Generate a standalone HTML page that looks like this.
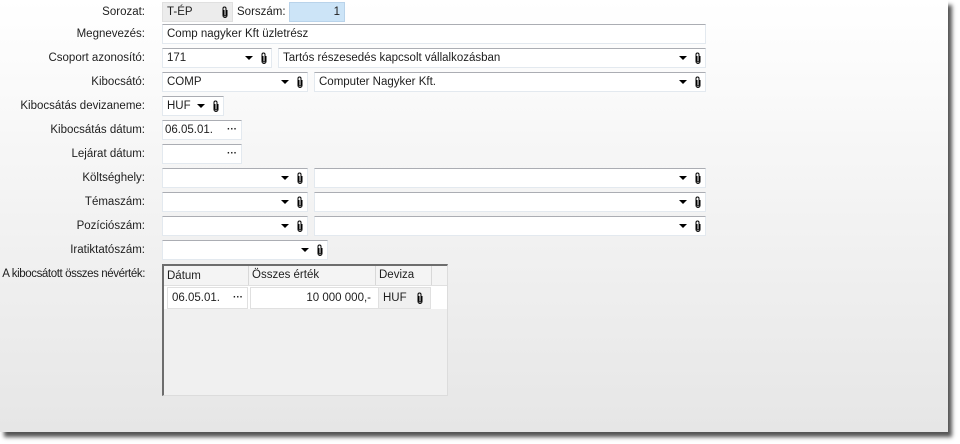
<!DOCTYPE html>
<html><head><meta charset="utf-8"><style>
body{margin:0;width:960px;height:444px;background:#fff;position:relative;overflow:hidden;font-family:"Liberation Sans",sans-serif;font-size:11.5px;color:#1e1e1e}
#p{position:absolute;left:0;top:0;width:948px;height:432px;background:linear-gradient(#fff,#e6e6e6);box-shadow:4px 5px 4px #555}
.l{position:absolute;right:803px;line-height:20px;white-space:nowrap}
.f{position:absolute;height:18px;background:#fff;border:1px solid #e3e9ef;border-top-color:#abadb3;line-height:18px;padding-left:4px;box-sizing:content-box;white-space:nowrap}
.a{position:absolute;right:18px;top:7px;width:0;height:0;border-left:4px solid transparent;border-right:4px solid transparent;border-top:4px solid #000}
.c{position:absolute;right:3px;top:3px}
.d{position:absolute;right:4px;top:0;font-weight:bold;font-size:10px}
</style></head><body><div id="p">
<svg width="0" height="0" style="position:absolute"><defs><symbol id="clip" viewBox="0 0 8 12"><path d="M3 4V9A1 1 0 0 0 5 9V2.5A1.5 1.5 0 0 0 2 2.5V9.5A2 2 0 0 0 6 9.5V4" fill="none" stroke="#000" stroke-width="1"/></symbol></defs></svg>

<div class="l" style="top:2px">Sorozat:</div>
<div class="f" style="left:162px;top:2px;width:65px;background:#ececec;border-color:#e0e0e0">T-ÉP<svg class="c" width="8" height="12"><use href="#clip"/></svg></div>
<div style="position:absolute;left:237px;top:2px;line-height:20px">Sorszám:</div>
<div class="f" style="left:289px;top:2px;width:50px;background:#cce4f7;border-color:#b9d3ea;text-align:right;padding-right:4px;padding-left:0">1</div>

<div class="l" style="top:24px">Megnevezés:</div>
<div class="f" style="left:162px;top:24px;width:538px">Comp nagyker Kft üzletrész</div>

<div class="l" style="top:48px">Csoport azonosító:</div>
<div class="f" style="left:162px;top:48px;width:104px">171<i class="a"></i><svg class="c" width="8" height="12"><use href="#clip"/></svg></div>
<div class="f" style="left:278px;top:48px;width:422px">Tartós részesedés kapcsolt vállalkozásban<i class="a"></i><svg class="c" width="8" height="12"><use href="#clip"/></svg></div>

<div class="l" style="top:72px">Kibocsátó:</div>
<div class="f" style="left:162px;top:72px;width:140px">COMP<i class="a"></i><svg class="c" width="8" height="12"><use href="#clip"/></svg></div>
<div class="f" style="left:314px;top:72px;width:386px">Computer Nagyker Kft.<i class="a"></i><svg class="c" width="8" height="12"><use href="#clip"/></svg></div>

<div class="l" style="top:96px">Kibocsátás devizaneme:</div>
<div class="f" style="left:162px;top:96px;width:56px">HUF<i class="a"></i><svg class="c" width="8" height="12"><use href="#clip"/></svg></div>

<div class="l" style="top:120px">Kibocsátás dátum:</div>
<div class="f" style="left:162px;top:120px;width:76px;padding-left:2px">06.05.01.<span class="d">···</span></div>

<div class="l" style="top:144px">Lejárat dátum:</div>
<div class="f" style="left:162px;top:144px;width:76px;padding-left:2px"><span class="d">···</span></div>

<div class="l" style="top:168px">Költséghely:</div>
<div class="f" style="left:162px;top:168px;width:140px"><i class="a"></i><svg class="c" width="8" height="12"><use href="#clip"/></svg></div>
<div class="f" style="left:314px;top:168px;width:386px"><i class="a"></i><svg class="c" width="8" height="12"><use href="#clip"/></svg></div>

<div class="l" style="top:192px">Témaszám:</div>
<div class="f" style="left:162px;top:192px;width:140px"><i class="a"></i><svg class="c" width="8" height="12"><use href="#clip"/></svg></div>
<div class="f" style="left:314px;top:192px;width:386px"><i class="a"></i><svg class="c" width="8" height="12"><use href="#clip"/></svg></div>

<div class="l" style="top:216px">Pozíciószám:</div>
<div class="f" style="left:162px;top:216px;width:140px"><i class="a"></i><svg class="c" width="8" height="12"><use href="#clip"/></svg></div>
<div class="f" style="left:314px;top:216px;width:386px"><i class="a"></i><svg class="c" width="8" height="12"><use href="#clip"/></svg></div>

<div class="l" style="top:240px">Iratiktatószám:</div>
<div class="f" style="left:162px;top:240px;width:160px"><i class="a"></i><svg class="c" width="8" height="12"><use href="#clip"/></svg></div>

<div class="l" style="top:264px;line-height:20px;letter-spacing:-0.4px">A kibocsátott összes névérték:</div>
<div style="position:absolute;left:162px;top:264px;width:283px;height:129px;background:#f0f0f0;border:1px solid #dcdcdc;border-top:2px solid #6d6d6d;border-left:2px solid #6d6d6d">
 <div style="position:absolute;left:0;top:0;width:283px;height:19px;background:#f4f4f4;border-bottom:1px solid #e0e0e0"></div>
 <div style="position:absolute;left:3px;top:1px;line-height:18px">Dátum</div>
 <div style="position:absolute;left:84px;top:0;height:19px;border-left:1px solid #d8d8d8;padding-left:3px;line-height:19px">Összes érték</div>
 <div style="position:absolute;left:211px;top:0;height:19px;border-left:1px solid #d8d8d8;padding-left:3px;line-height:19px">Deviza</div>
 <div style="position:absolute;left:267px;top:0;height:19px;border-left:1px solid #d8d8d8"></div>
 <div style="position:absolute;left:0;top:20px;width:283px;height:23px;background:#fff"></div>
 <div class="f" style="left:3px;top:21px;width:75px;border-color:#e0e0e0;line-height:20px;height:20px">06.05.01.<span class="d" style="line-height:20px">···</span></div>
 <div class="f" style="left:86px;top:21px;width:116px;border-color:#e0e0e0;text-align:right;padding-right:8px;line-height:20px;height:20px">10 000 000,-</div>
 <div class="f" style="left:214px;top:21px;width:47px;background:#f0f0f0;border-color:#e0e0e0;line-height:20px;height:20px">HUF<svg class="c" style="top:4px;right:6px" width="8" height="12"><use href="#clip"/></svg></div>
</div>
</div></body></html>
